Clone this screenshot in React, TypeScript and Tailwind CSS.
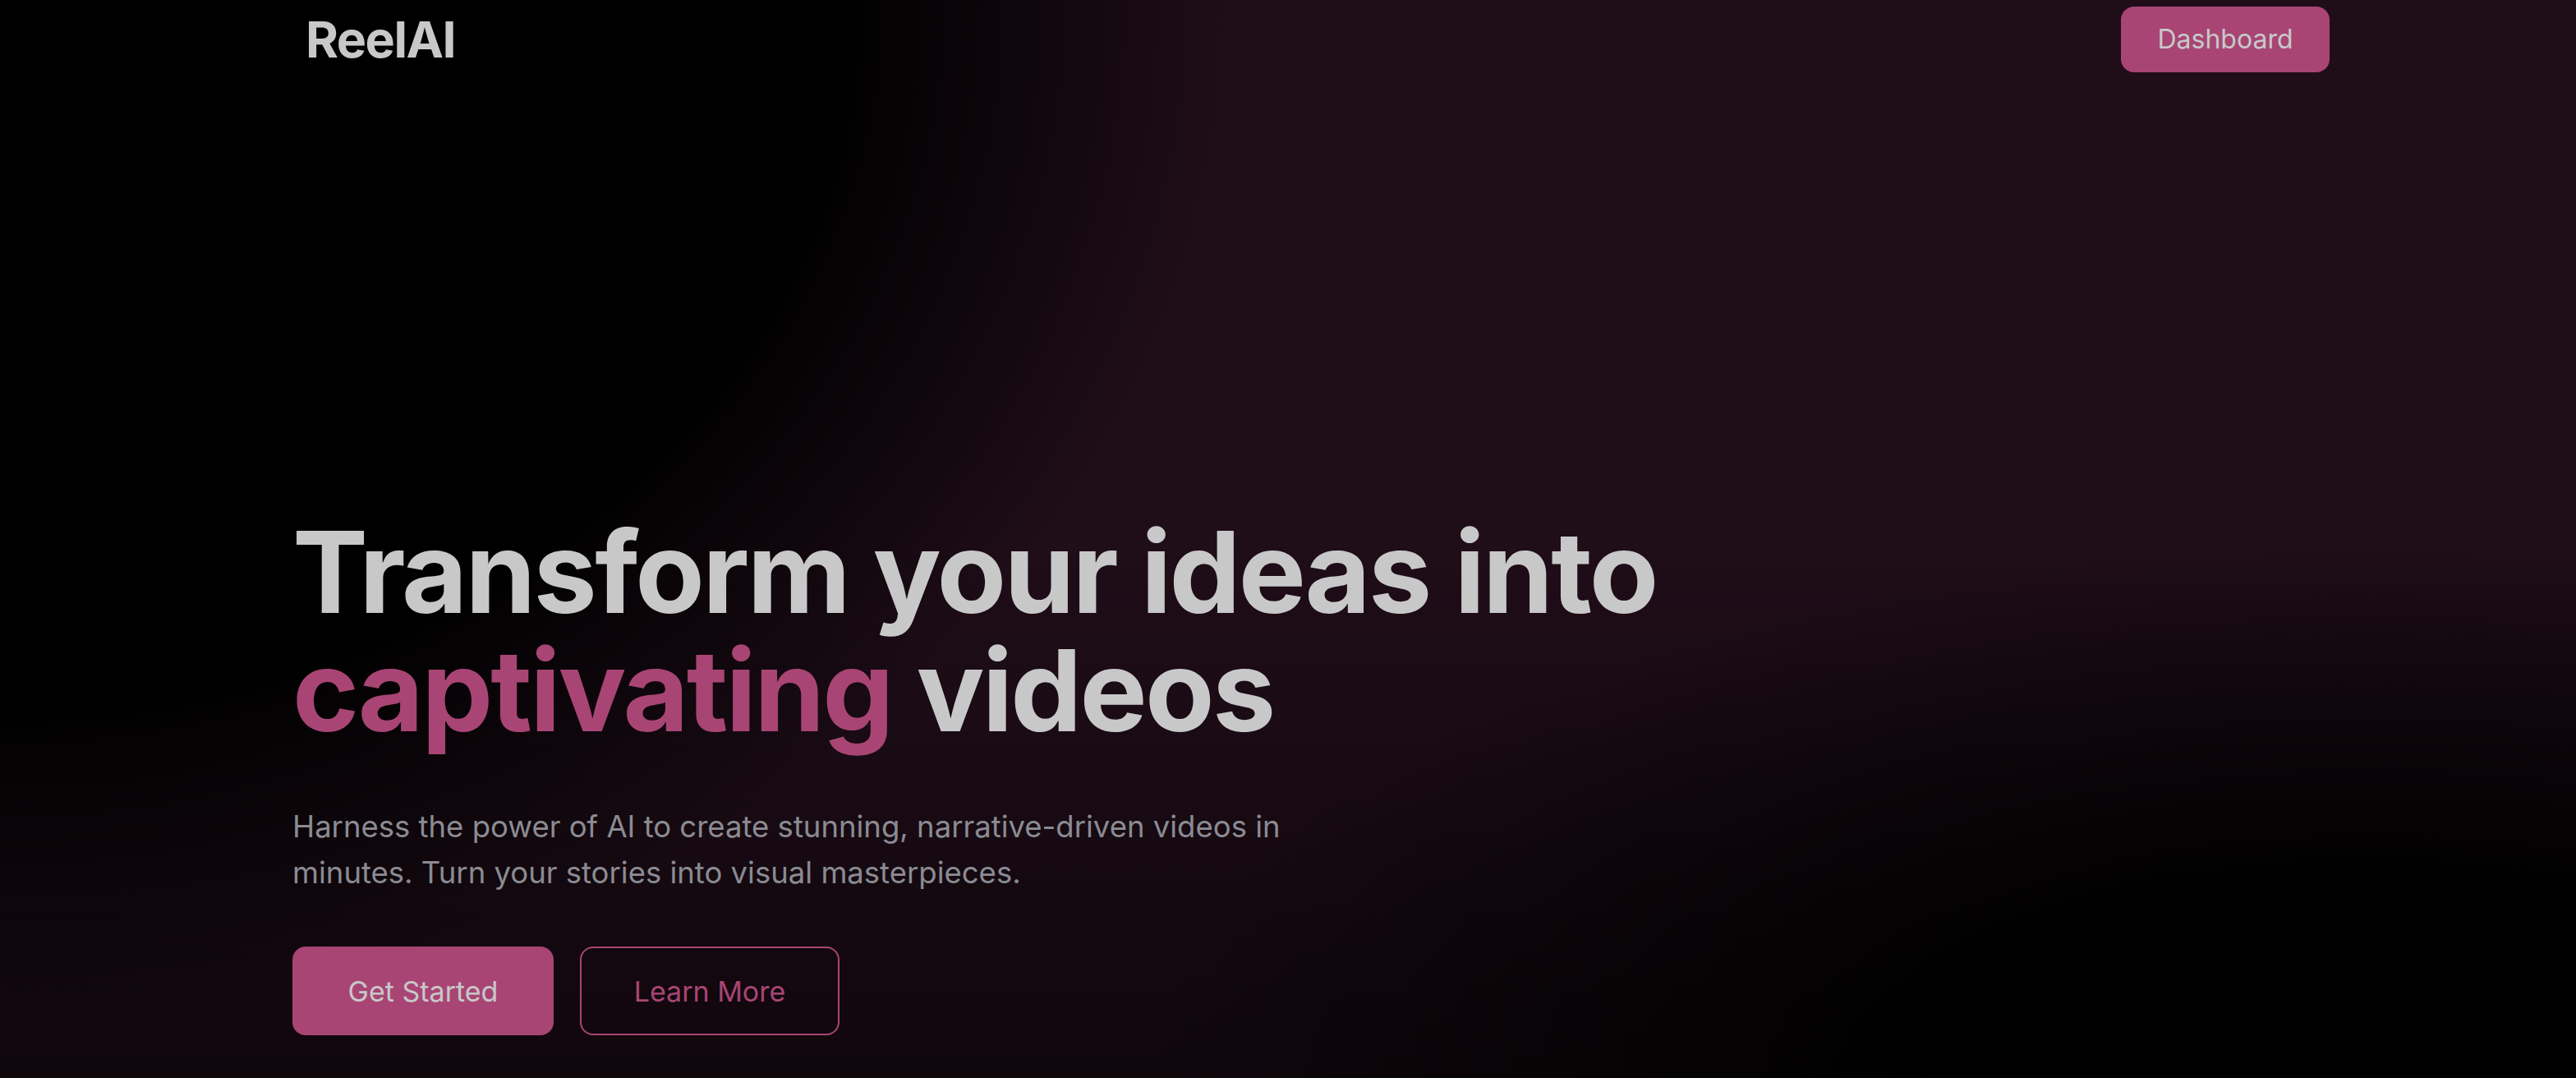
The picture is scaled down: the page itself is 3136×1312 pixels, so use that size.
import { useState } from 'react'

const font = { fontFamily: 'Inter, "Noto Sans", sans-serif' }

function Nav() {
  return (
    <header className="flex items-center justify-between pl-[372px] pr-[300px] pt-[8px]">
      <span className="text-[61px] font-bold leading-none tracking-tight text-[#c8c8c8]">ReelAI</span>
      <button className="h-[80px] w-[254px] rounded-[16px] bg-[#a84574] text-[32px] text-[#c8c8c8]">
        Dashboard
      </button>
    </header>
  )
}

export default function App() {
  const [started, setStarted] = useState(false)

  return (
    <div
      style={font}
      className="relative h-[1312px] overflow-hidden bg-[#1f0d18] bg-[radial-gradient(ellipse_1500px_1250px_at_0%_0%,#000_68%,transparent_100%),radial-gradient(ellipse_1500px_650px_at_92%_100%,#000_35%,transparent_100%),linear-gradient(to_bottom,transparent_50%,rgba(0,0,0,0.5)_100%)]"
    >
      <Nav />

      <main className="pl-[356px] pt-[536px]">
        <h1 className="text-[138px] font-bold leading-[144px] tracking-[-0.02em] text-[#c8c8c8]">
          <span className="block">Transform your ideas into</span>
          <span className="block">
            <span className="text-[#a84574]">captivating</span> videos
          </span>
        </h1>

        <p className="mt-[66px] max-w-[1280px] text-[36.5px] leading-[56px] text-[#8b8b93]">
          Harness the power of AI to create stunning, narrative-driven videos in minutes. Turn your stories into visual masterpieces.
        </p>

        <div className="mt-[62px] flex gap-[32px]">
          <button
            onClick={() => setStarted(!started)}
            className="h-[108px] w-[318px] rounded-[16px] bg-[#a84574] text-[34px] text-[#c8c8c8]"
          >
            Get Started
          </button>
          <button className="h-[108px] w-[316px] rounded-[16px] border-2 border-[#a84574] text-[34px] text-[#a84574]">
            Learn More
          </button>
        </div>
      </main>
    </div>
  )
}
